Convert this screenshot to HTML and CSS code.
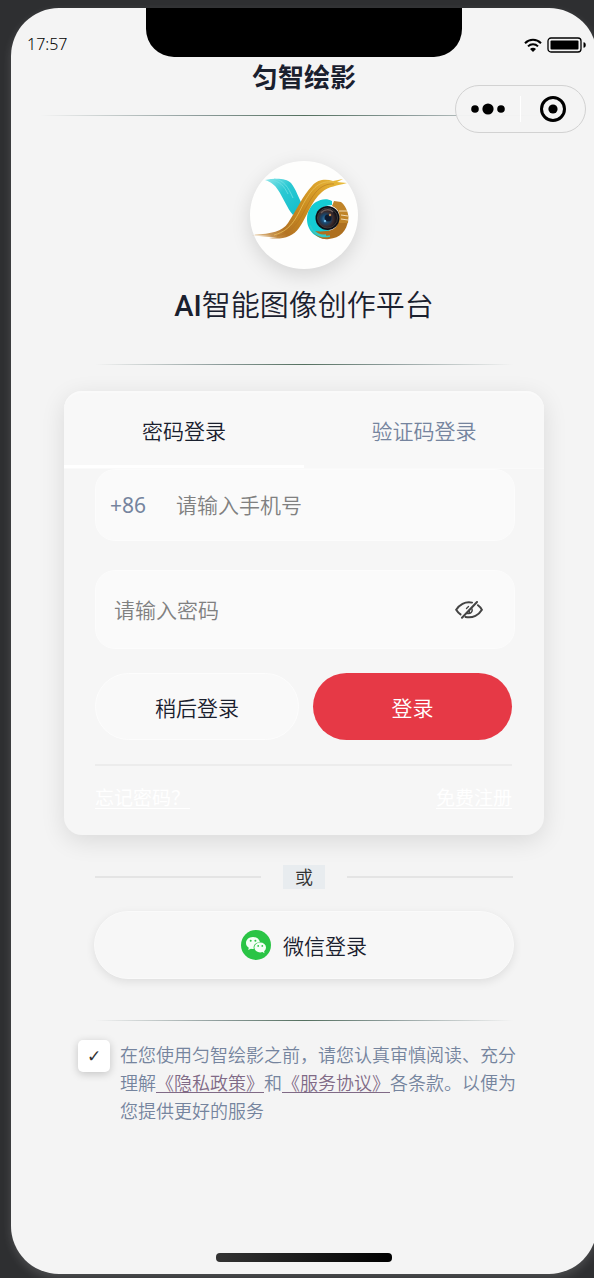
FILE: index.html
```html
<!DOCTYPE html>
<html lang="zh-CN">
<head>
<meta charset="utf-8">
<meta name="viewport" content="width=device-width, initial-scale=1">
<title>匀智绘影</title>
<link rel="stylesheet" href="styles.css">
</head>
<body>
<div class="phone">
  <div class="statusbar">
    <span class="time">17:57</span>
    <div class="notch"></div>
    <div class="status-icons">
      <svg width="18" height="14" viewBox="0 0 18 14" fill="none" stroke="#000" stroke-width="2"><path d="M1 5.2C5.500.6 12.500.6 17 5.200"/><path d="M4 8.400C6.800 5.600 11.200 5.600 14 8.400"/><path d="M9 14 6 11C7.700 9.400 10.300 9.400 12 11Z" fill="#000" stroke="none"/></svg>
      <svg width="40" height="16" viewBox="0 0 40 16"><rect x="1" y="1" width="33" height="14" rx="3" fill="none" stroke="#000" stroke-width="1.300"/><rect x="3.500" y="3.500" width="28" height="9" rx="1" fill="#000"/><path d="M36.500 5.200C39.500 5.200 39.500 10.800 36.500 10.800Z" fill="#000"/></svg>
    </div>
  </div>

  <header class="header">
    <h1 class="title">匀智绘影</h1>
    <div class="capsule">
      <button class="capsule-btn" type="button" aria-label="更多">
        <svg width="34" height="12" viewBox="0 0 34 12"><circle cx="4" cy="6" r="3.800"/><circle cx="17" cy="6" r="5.600"/><circle cx="30" cy="6" r="3.800"/></svg>
      </button>
      <button class="capsule-btn capsule-close" type="button" aria-label="关闭">
        <svg width="26" height="26" viewBox="0 0 26 26"><circle cx="13" cy="13" r="11.500" fill="none" stroke="#000" stroke-width="3"/><circle cx="13" cy="13" r="4.600"/></svg>
      </button>
    </div>
  </header>
  <div class="fade-line fade-line-wide"></div>

  <main class="content">
    <div class="logo">
      <svg viewBox="0 0 108 108" width="108" height="108" role="img" aria-label="logo">
        <defs>
          <linearGradient id="teal" x1="15" y1="18" x2="54" y2="54" gradientUnits="userSpaceOnUse"><stop offset="0" stop-color="#8fe6ea"/><stop offset=".4" stop-color="#2cc9d3"/><stop offset="1" stop-color="#10bccb"/></linearGradient>
          <linearGradient id="gold" x1="95" y1="20" x2="8" y2="76" gradientUnits="userSpaceOnUse"><stop offset="0" stop-color="#e9bd3c"/><stop offset=".25" stop-color="#dca32c"/><stop offset=".5" stop-color="#c98a1e"/><stop offset=".75" stop-color="#b47424"/><stop offset="1" stop-color="#dcb682"/></linearGradient>
          <radialGradient id="lens" cx=".4" cy=".55" r=".6"><stop offset="0" stop-color="#3f86b5"/><stop offset=".35" stop-color="#17466e"/><stop offset=".65" stop-color="#3b2a2b"/><stop offset="1" stop-color="#0a0c14"/></radialGradient>
        </defs>
        <path d="M15 19C25 17 36 17 41 22C46 28 49 38 53 45L43 54C37 47 33 36 28 29C25 24 21 21 15 19Z" fill="url(#teal)"/>
        <path d="M20 19C30 20 34 25 38 33M24 18C34 19 38 26 43 37" stroke="#6fdfe4" stroke-width=".8" fill="none"/>
        <path d="M82 40C77 37 71 38 66 41C60 45 57 51 57 58C57 69 65 78 78 78L80 67C70 69 66 63 66 57C66 50 71 45 82 44Z" fill="#14ccd3"/>
        <path d="M62 70C67 76 72 79 79 78C90 77 97 70 98 59L88 57C89 65 84 70 76 70C70 71 66 70 62 70Z" fill="#ae701f"/>
        <path d="M84 40L91 41C95 44 98 50 98.500 56L98 62L88 62C91 54 89 48 82 45Z" fill="#c08428"/>
        <path d="M60 64C63 73 70 77 80 75M64 70C68 74 72 75 76 74" stroke="#2fcbc9" stroke-width="1.500" fill="none"/>
        <path d="M89 50L97 50M91 54L98 55M91 58L98 59" stroke="#f7e5c5" stroke-width=".9"/>
        <path d="M97 22C87 25 79 25 72 31C61 40 57 56 49 67C43 76 31 79 19 77L27 76L9 76L22 75L1 74C20 73 32 71 38 62C46 50 53 34 62 25C68 18 76 18 83 20L93 18L87 21Z" fill="url(#gold)"/>
        <path d="M84 21C69 19 62 28 55 40C47 54 43 69 24 74" stroke="#e9bf58" stroke-width=".8" fill="none"/>
        <path d="M84 23C70 22 63 34 57 45C49 60 43 72 27 75" stroke="#b37622" stroke-width=".6" fill="none"/>
        <circle cx="77.500" cy="57" r="12" fill="#0b0e16"/>
        <circle cx="77.500" cy="57" r="10" fill="url(#lens)" stroke="#4a4542" stroke-width=".8"/>
        <path d="M71 52C74 48 80 48 83 51" stroke="#6b5d5a" stroke-width="1.500" fill="none"/>
        <circle cx="78" cy="57" r="3.500" fill="#0c1a30"/><circle cx="80" cy="54" r="1.200" fill="#c9874a"/><circle cx="75" cy="60" r="1.200" fill="#75bfeb"/>
      </svg>
    </div>
    <h2 class="slogan"><span class="slogan-ai">AI</span>智能图像创作平台</h2>
    <div class="fade-line"></div>

    <form class="card">
      <div class="tabs" role="tablist">
        <button class="tab tab-active" type="button" role="tab" aria-selected="true">密码登录</button>
        <button class="tab" type="button" role="tab" aria-selected="false">验证码登录</button>
      </div>
      <div class="fields">
        <div class="field field-phone">
          <label class="prefix" for="phone">+86</label>
          <input class="input" id="phone" type="tel" placeholder="请输入手机号">
        </div>
        <div class="field field-password">
          <input class="input" type="password" placeholder="请输入密码" aria-label="密码">
          <button class="eye" type="button" aria-label="显示密码">
            <svg width="28" height="18" viewBox="0 0 28 18" fill="none" stroke="#444" stroke-width="2" stroke-linecap="round"><path d="M17 1.600C10 0 4 4 1.200 8.800C2.400 10.800 3.800 12.300 5.500 13.400"/><path d="M23 4.200C24.800 5.500 26.200 7.200 26.900 8.800C24 13.800 18 17.500 10.500 15.900"/><path d="M22 1 7 16.800"/><path d="M17 8C18 11 15.500 13 12.500 12.500M14.300 9.200V11.500" stroke-width="1.500"/><path d="M11.500 7.500 13.500 5.500" stroke-width="1.300"/></svg>
          </button>
        </div>
        <div class="actions">
          <button class="btn btn-later" type="button">稍后登录</button>
          <button class="btn btn-login" type="submit">登录</button>
        </div>
        <div class="links">
          <a class="link" href="#">忘记密码？</a>
          <a class="link" href="#">免费注册</a>
        </div>
      </div>
    </form>

    <div class="or"><span class="or-text">或</span></div>

    <button class="wechat" type="button">
      <svg width="30" height="30" viewBox="0 0 30 30"><circle cx="15" cy="15" r="15" fill="#2ac445"/><path d="M12 7C7.700 7 5 9.800 5 13C5 15 6 16.700 7.800 17.800L7.200 20L10 18.700C11 19 12 19 12.800 18.900C11.800 15 15 12 19 12.200C18.300 9 15.500 7 12 7Z" fill="#f4fff5"/><ellipse cx="19.200" cy="17.500" rx="5.800" ry="5" fill="#f4fff5"/><path d="M20 21 23.400 23.200 23 20Z" fill="#f4fff5"/><g fill="#2ac445"><circle cx="9.700" cy="10.800" r="1"/><circle cx="14.400" cy="10.800" r="1"/><circle cx="17.200" cy="15.900" r=".9"/><circle cx="21.300" cy="15.900" r=".9"/></g></svg>
      <span>微信登录</span>
    </button>

    <div class="fade-line"></div>

    <div class="agreement">
      <input class="check" type="checkbox" checked aria-labelledby="terms">
      <p class="terms" id="terms">在您使用匀智绘影之前，请您认真审慎阅读、充分理解<a class="term-link" href="#">《隐私政策》</a>和<a class="term-link" href="#">《服务协议》</a>各条款。以便为您提供更好的服务</p>
    </div>
  </main>
  <div class="home-bar"></div>
</div>
</body>
</html>
```
FILE: styles.css
```css
* { box-sizing: border-box; }

body {
  margin: 0;
  min-height: 100vh;
  display: flex;
  padding: 8px 0 4px 11px;
  overflow: hidden;
  background: #2e2f31;
  color: #1a202e;
  font-family: "Noto Sans", "Noto Sans CJK SC", sans-serif;
  font-size: 21px;
  font-weight: 350;
}

button, input { font: inherit; color: inherit; }
button { border: 0; padding: 0; background: none; cursor: pointer; }
svg { display: block; flex: none; }

.phone {
  position: relative;
  flex: 1;
  display: flex;
  flex-direction: column;
  margin-right: -3px;
  border-radius: 48px;
  background: #f4f4f4;
  box-shadow: 0 4px 10px rgba(255, 255, 255, 0.15);
}

.statusbar {
  display: grid;
  grid-template-columns: 1fr 316px 1fr;
  height: 49px;
}
.time {
  padding: 24px 0 0 16px;
  font-size: 16px;
  line-height: 24px;
  color: #000;
}
.notch { background: #000; border-radius: 0 0 28px 28px; }
.status-icons {
  display: flex;
  justify-content: flex-end;
  align-items: center;
  gap: 5px;
  padding: 25px 10px 0 0;
}

.title {
  margin: 0 0 18px;
  text-align: center;
  font-size: 26px;
  font-weight: 700;
  line-height: 40px;
}
.capsule {
  position: absolute;
  z-index: 1;
  top: 77px;
  right: 11px;
  display: flex;
  width: 131px;
  height: 48px;
  border: 1px solid #d2d2d2;
  border-radius: 24px;
  background: rgba(243, 243, 243, 0.95);
}
.capsule-btn {
  flex: 1;
  display: flex;
  align-items: center;
  justify-content: center;
}
.capsule-close {
  margin: 10px 0;
  border-left: 1px solid #fff;
}

.fade-line {
  height: 1px;
  margin: 0 31px;
  background: linear-gradient(90deg, rgba(84, 116, 100, 0), #8d9c9b 30%, #54705f 50%, #8d9c9b 70%, rgba(84, 116, 100, 0));
}
.fade-line-wide { margin: 0 29px; }

.content { flex: 1; padding: 45px 53px 0; }

.logo {
  width: 108px;
  height: 108px;
  margin: 0 auto;
  border-radius: 50%;
  background: #fefefd;
  box-shadow: 0 6px 20px rgba(0, 0, 0, 0.13);
}
.slogan {
  margin: 16px 0 38px;
  text-align: center;
  font-size: 29px;
  font-weight: 350;
  line-height: 40px;
}
.slogan-ai { font-family: Roboto, sans-serif; font-weight: 500; }

.card {
  margin-top: 26px;
  border-radius: 18px;
  background: #f6f6f6;
  box-shadow: 0 6px 24px rgba(0, 0, 0, 0.11);
}
.tabs {
  display: flex;
  height: 78px;
  border-top: 2px solid #fafafa;
  border-bottom: 1px solid #fafafa;
  border-radius: 18px 18px 0 0;
  background: #f8f8f8;
}
.tab {
  flex: 1;
  padding-top: 2px;
  border-bottom: 3px solid transparent;
  color: #75849e;
}
.tab-active { color: #1a202e; border-bottom-color: #fff; }

.fields { padding: 0 29px 23px 31px; }
.field {
  display: flex;
  align-items: center;
  border: 1px solid #fcfcfc;
  border-radius: 20px;
  background: #fafafa;
}
.field-phone { height: 72px; padding: 0 14px; gap: 30px; }
.field-password { height: 79px; margin-top: 29px; padding: 0 31px 0 18px; }
.prefix { color: #75849e; font-weight: 400; }
.input {
  flex: 1;
  min-width: 0;
  padding: 0;
  border: 0;
  outline: 0;
  background: none;
}
.input::placeholder { color: #808080; opacity: 1; }

.actions {
  display: grid;
  grid-template-columns: 204fr 199fr;
  gap: 14px;
  margin-top: 24px;
  padding-right: 3px;
}
.btn { height: 67px; border-radius: 34px; }
.btn-later { border: 1px solid #fdfdfd; background: #f9f9f9; }
.btn-login { background: #e63946; color: #fff; }

.links {
  display: flex;
  justify-content: space-between;
  margin: 24px 3px 0 0;
  padding-top: 18px;
  border-top: 2px solid #ececec;
  font-size: 19px;
  font-weight: 400;
  line-height: 28px;
}
.link { color: #fff; text-underline-offset: 3px; }

.or {
  display: flex;
  align-items: center;
  gap: 22px;
  margin: 30px 31px 0;
}
.or::before, .or::after {
  content: "";
  flex: 1;
  height: 2px;
  background: #e4e4e4;
}
.or-text {
  padding: 0 12px;
  background: #e8ecef;
  color: #333;
  font-size: 18px;
  line-height: 24px;
}

.wechat {
  display: flex;
  align-items: center;
  justify-content: center;
  gap: 12px;
  width: calc(100% - 60px);
  height: 68px;
  margin: 22px 30px 41px;
  border: 1px solid #fafafa;
  border-radius: 34px;
  background: #f7f7f7;
  box-shadow: 0 3px 10px rgba(0, 0, 0, 0.09);
}

.agreement {
  display: flex;
  gap: 10px;
  margin-top: 19px;
  padding: 0 26px 0 14px;
}
.check {
  appearance: none;
  flex: none;
  display: grid;
  place-items: center;
  width: 32px;
  height: 32px;
  margin: 0;
  border-radius: 5px;
  background: #fff;
  box-shadow: 0 2px 8px rgba(0, 0, 0, 0.2);
}
.check:checked::before {
  content: "✓";
  color: #333;
  font: 700 17px/1 "DejaVu Sans", sans-serif;
}
.terms {
  flex: 1;
  margin: 0;
  font-family: "Noto Sans CJK SC", sans-serif;
  font-size: 18px;
  line-height: 28px;
  color: #75849e;
}
.term-link { color: #806a86; text-underline-offset: 2px; }

.home-bar {
  width: 30%;
  height: 9px;
  margin: 0 auto 12px;
  border-radius: 4px;
  background: linear-gradient(90deg, #333, #000);
}
```
